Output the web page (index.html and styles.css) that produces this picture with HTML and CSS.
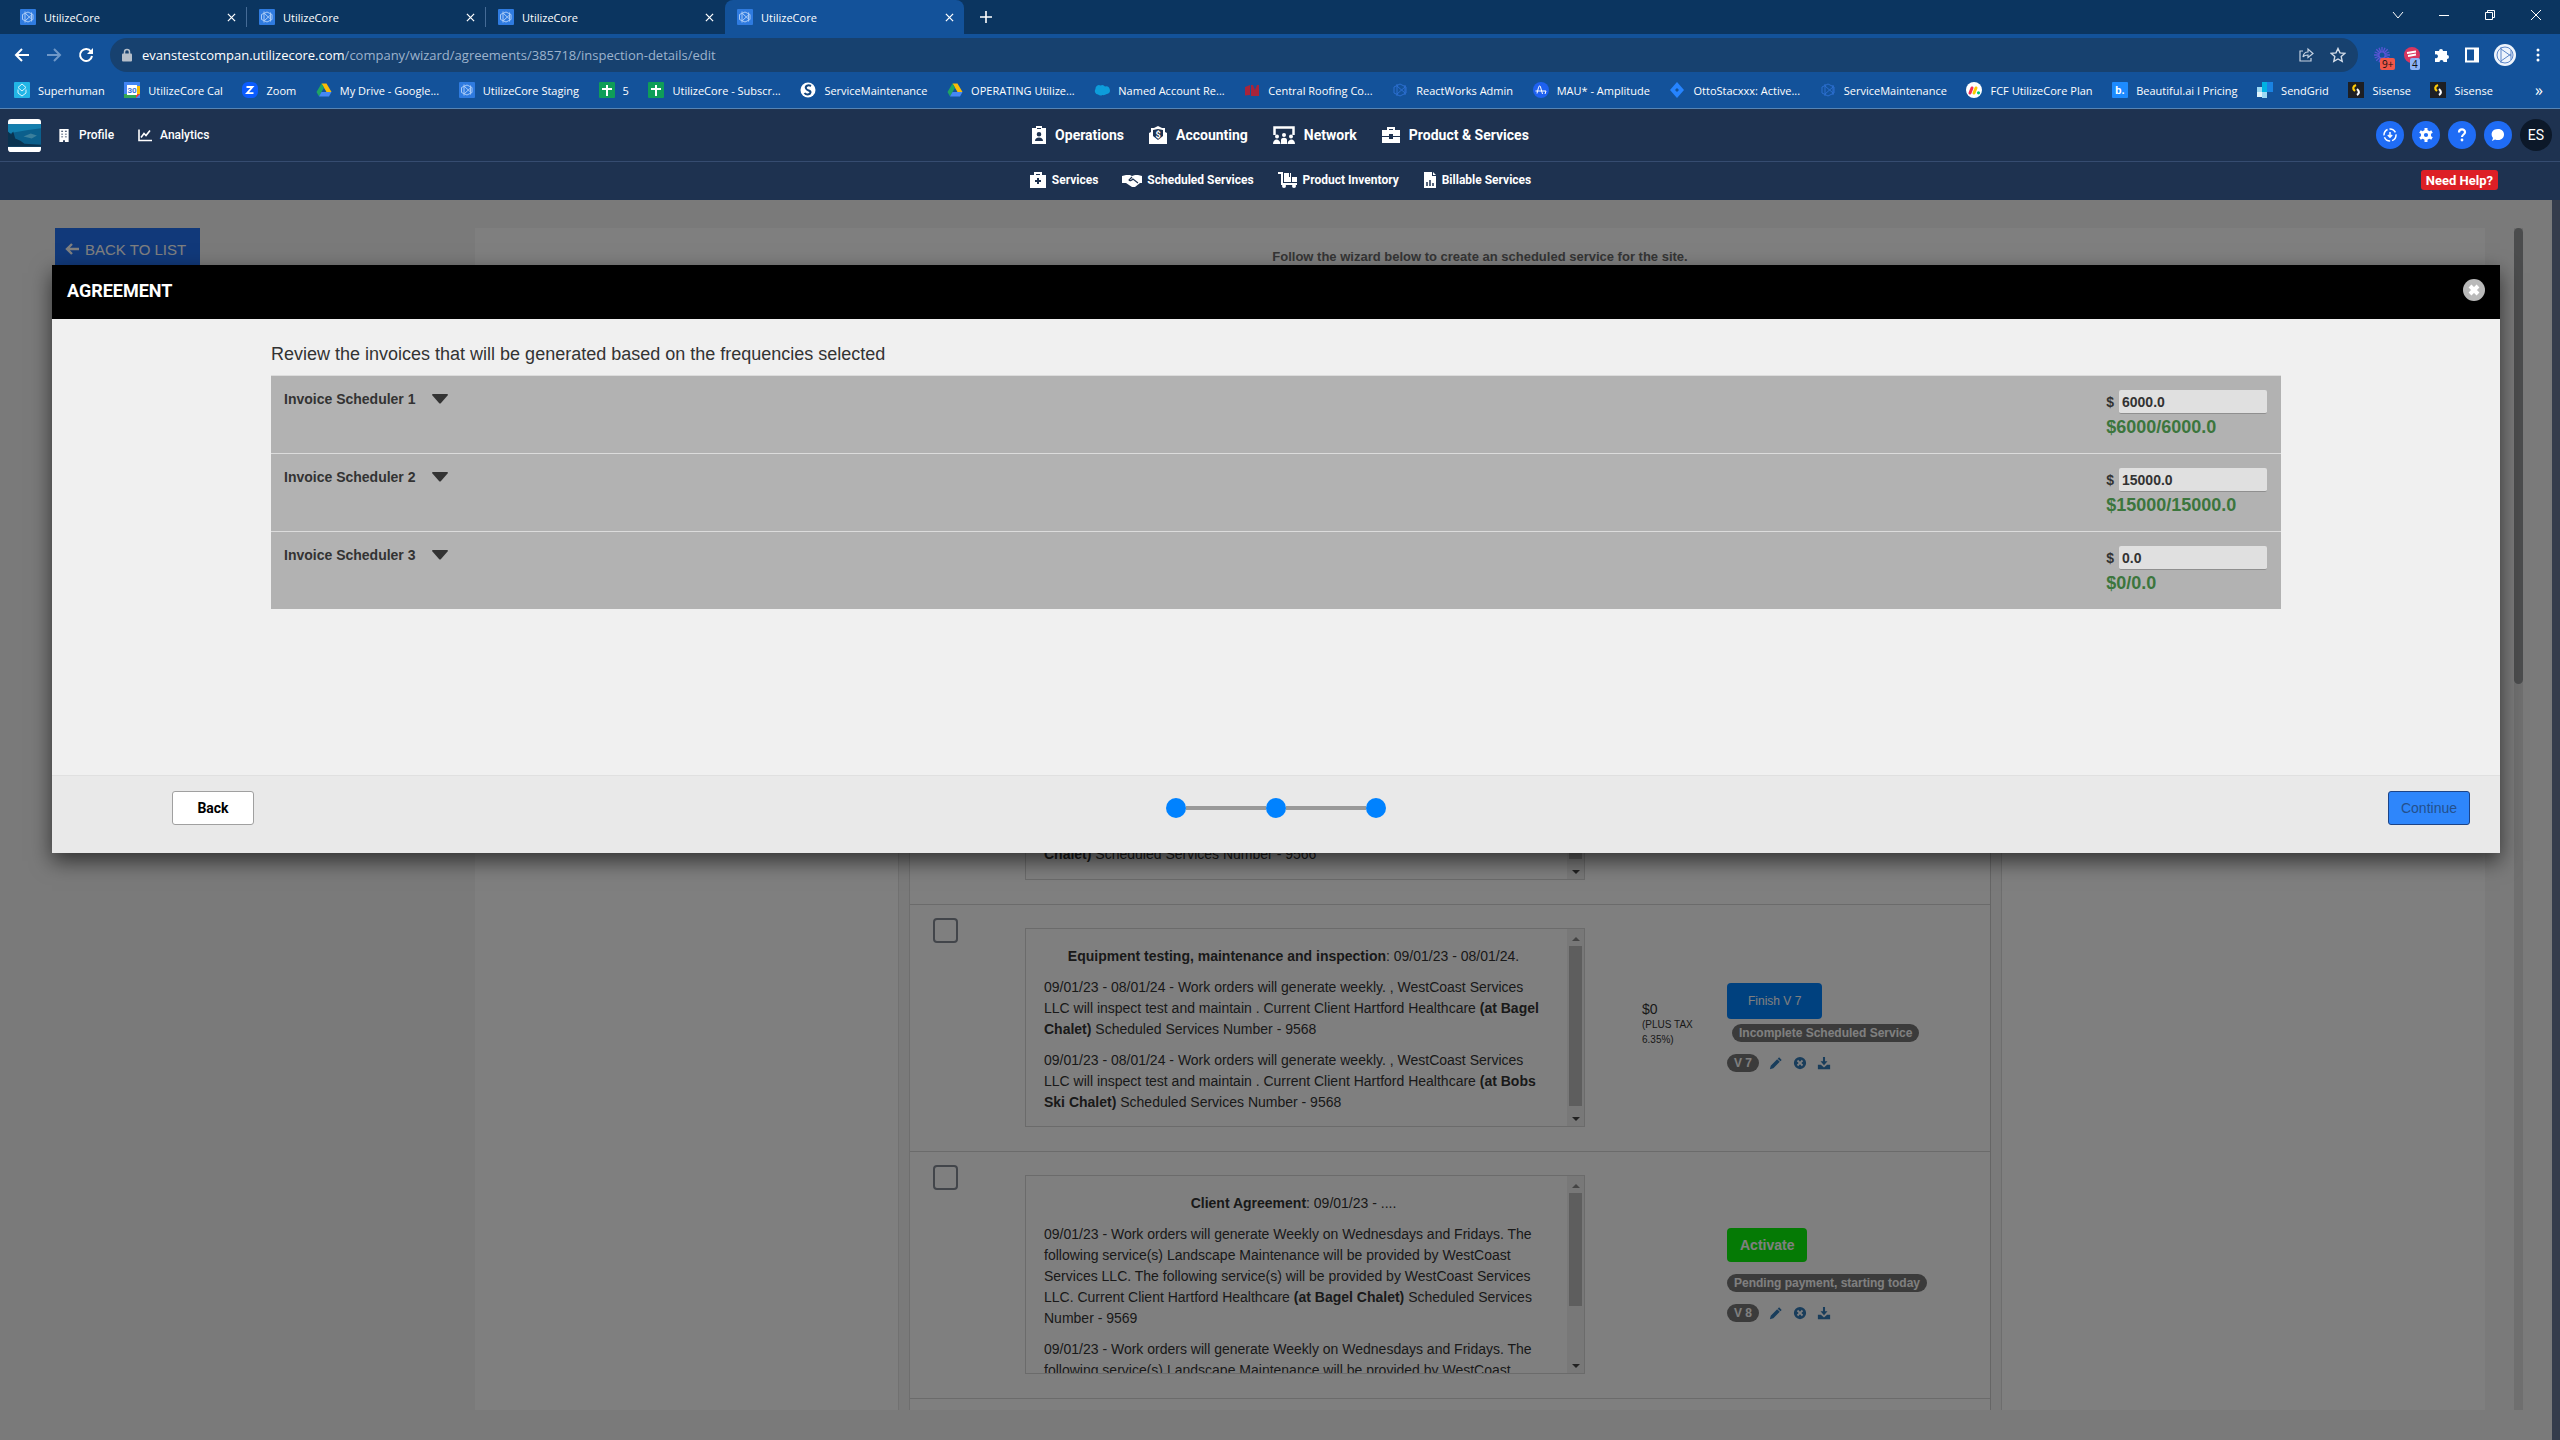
FILE: index.html
```
<!DOCTYPE html>
<html lang="en">
<head>
    <meta charset="UTF-8">
    <meta name="viewport" content="width=device-width, initial-scale=1.0">
    <title>UtilizeCore</title>
    <link rel="stylesheet" href="styles.css">
</head>
<body>

<!-- shared icons -->
<svg class="icon-sheet" aria-hidden="true">
    <symbol id="uc" viewBox="0 0 16 16"><rect width="16" height="16" rx="1" fill="#2f7be0"/><g fill="none" stroke="#a9cbf7" stroke-width="1"><path d="M5 2.500v11M5 4l7 6.500M5 12l7-6.500M11.500 3.500v9"/><path d="M2.500 5.500 8 3l5 2.500v5L8 13l-5.500-2.500z"/></g></symbol>
    <symbol id="uc-ghost" viewBox="0 0 16 16"><g fill="none" stroke="#2c6fd0" stroke-width="1"><path d="M5 2v12M5 4l8 7M5 12l8-7M13 3v10"/><path d="M2 5l6-3 6 3v6l-6 3-6-3z"/></g></symbol>
    <symbol id="drive" viewBox="0 0 16 16"><path d="M5.500 1.500h5l5 8.500h-5z" fill="#fbbc04"/><path d="M5.500 1.500 8 5.800 3 14.500.5 10z" fill="#1fa463"/><path d="M5.500 10h10L13 14.500H3z" fill="#4688f4"/></symbol>
    <symbol id="sheet" viewBox="0 0 16 16"><rect width="16" height="16" rx="1" fill="#0f9d58"/><path d="M7 3h2v3h4v2H9v6H7V8H3V6h4z" fill="#fff"/></symbol>
    <symbol id="sisense" viewBox="0 0 16 16"><rect width="16" height="16" fill="#1d1f24"/><path d="M8 3C4.500 4.500 4.500 7 7 9" fill="none" stroke="#ffcb05" stroke-width="2.200"/><path d="M9 7c2.500 2 2.500 4.500 0 6" fill="none" stroke="#fff" stroke-width="2.200"/></symbol>
    <symbol id="close" viewBox="0 0 10 10"><path d="M1 1l8 8M9 1 1 9" fill="none" stroke="currentColor" stroke-width="1.400"/></symbol>
    <symbol id="pencil" viewBox="0 0 16 16"><path d="M11.500 1.500l3 3-1.500 1.500-3-3zM9.300 3.700l3 3L5 14l-4 1 1-4z" fill="currentColor"/></symbol>
    <symbol id="cancel" viewBox="0 0 16 16"><path fill="currentColor" fill-rule="evenodd" d="M8 1a7 7 0 1 0 0 14A7 7 0 0 0 8 1zM5.900 4.400 8 6.500l2.100-2.100 1.500 1.500L9.500 8l2.100 2.100-1.500 1.500L8 9.500l-2.100 2.100-1.500-1.500L6.500 8 4.400 5.900z"/></symbol>
    <symbol id="download" viewBox="0 0 16 16"><path fill="currentColor" d="M6.800 1h2.400v5H12L8 10.500 4 6h2.800zM1 10h3.500L8 13l3.500-3H15v5H1z"/></symbol>
    <symbol id="caret" viewBox="0 0 16 10"><path d="M0 1 Q0 0 1 0H15Q16 0 16 1L9 9Q8 10 7 9z" fill="currentColor"/></symbol>
</svg>

<div class="browser">
    <div class="tab-strip">
        <div class="tab"><svg class="favicon"><use href="#uc"/></svg><span>UtilizeCore</span><button aria-label="Close tab"><svg><use href="#close"/></svg></button></div>
        <div class="tab"><svg class="favicon"><use href="#uc"/></svg><span>UtilizeCore</span><button aria-label="Close tab"><svg><use href="#close"/></svg></button></div>
        <div class="tab"><svg class="favicon"><use href="#uc"/></svg><span>UtilizeCore</span><button aria-label="Close tab"><svg><use href="#close"/></svg></button></div>
        <div class="tab active"><svg class="favicon"><use href="#uc"/></svg><span>UtilizeCore</span><button aria-label="Close tab"><svg><use href="#close"/></svg></button></div>
        <button class="new-tab" aria-label="New tab"><svg viewBox="0 0 12 12"><path d="M6 0v12M0 6h12" stroke="#fff" stroke-width="1.600"/></svg></button>
        <div class="window-buttons">
            <button aria-label="Search tabs"><svg viewBox="0 0 12 12"><path d="M1 3l5 6 5-6" fill="none" stroke="#fff"/></svg></button>
            <button aria-label="Minimize"><svg viewBox="0 0 12 12"><path d="M1 6.500h10" stroke="#fff"/></svg></button>
            <button aria-label="Restore"><svg viewBox="0 0 12 12"><path d="M1.500 3.500h7v7h-7zM3.500 3.500v-2h7v7h-2" fill="none" stroke="#fff"/></svg></button>
            <button aria-label="Close"><svg viewBox="0 0 12 12"><path d="M1 1l10 10M11 1 1 11" stroke="#fff"/></svg></button>
        </div>
    </div>

    <div class="toolbar">
        <button aria-label="Back"><svg viewBox="0 0 16 16"><path d="M15 8H2M8 2 2 8l6 6" fill="none" stroke="#fff" stroke-width="2"/></svg></button>
        <button aria-label="Forward"><svg viewBox="0 0 16 16"><path d="M1 8h13M8 2l6 6-6 6" fill="none" stroke="#6f98c8" stroke-width="2"/></svg></button>
        <button aria-label="Reload"><svg viewBox="0 0 16 16"><path d="M13 4.500A6 6 0 1 0 14 9" fill="none" stroke="#fff" stroke-width="2"/><path d="M15 1v6H9z" fill="#fff"/></svg></button>
        <div class="omnibox">
            <svg class="lock" viewBox="0 0 10 14"><path d="M2.500 6V4a2.500 2.500 0 0 1 5 0v2" fill="none" stroke="#b6bfca" stroke-width="1.500"/><rect y="5.500" width="10" height="8" rx="1" fill="#b6bfca"/></svg>
            <span class="url">evanstestcompan.utilizecore.com<span>/company/wizard/agreements/385718/inspection-details/edit</span></span>
            <button aria-label="Share"><svg viewBox="0 0 16 16"><path d="M5 4H2v10h11v-3M5 10c.5-3.500 2.500-5 5-5V2l5 4.500-5 4V8c-2.500 0-4 .5-5 2z" fill="none" stroke="#c5d2e2" stroke-width="1.200"/></svg></button>
            <button aria-label="Bookmark"><svg viewBox="0 0 16 16"><path d="M8 1.500l2 4.400 4.800.5-3.600 3.200 1 4.800L8 12l-4.200 2.400 1-4.800L1.200 6.400 6 5.900z" fill="none" stroke="#d5deea" stroke-width="1.400"/></svg></button>
        </div>
        <div class="extensions">
            <button class="ext" aria-label="Loom"><svg viewBox="0 0 16 16"><path d="M8 0v16M0 8h16M2.300 2.300l11.400 11.400M13.700 2.300 2.300 13.700M5 .7l6 14.600M15.300 5 .7 11M11 .7 5 15.300M.7 5l14.600 6" stroke="#5a55d6" stroke-width="1.300"/><circle cx="8" cy="8" r="2.500" fill="#13529a"/></svg><span class="badge-red">9+</span></button>
            <button class="ext" aria-label="Recorder"><svg viewBox="0 0 16 16"><circle cx="8" cy="8" r="8" fill="#d9365f"/><path d="M3 6l9-1.500M4 9l8-1.500" stroke="#fff" stroke-width="1.800"/></svg><span class="badge-blue">4</span></button>
            <button aria-label="Extensions"><svg viewBox="0 0 16 16"><path d="M1 4h4a2 2 0 1 1 4 0h4v4a2 2 0 1 1 0 4v3H9.500a2 2 0 1 0-4 0H1v-4a2 2 0 1 0 0-3.500z" fill="#fff"/></svg></button>
            <button aria-label="Side panel"><svg viewBox="0 0 16 16"><path d="M2 1.500h12v13H2z" fill="none" stroke="#fff" stroke-width="2"/><path d="M10 1h5v14h-5z" fill="#fff"/></svg></button>
            <button class="avatar" aria-label="Account"><svg viewBox="0 0 22 22"><circle cx="11" cy="11" r="11" fill="#eef4fc"/><g fill="none" stroke="#5c86c8"><path d="M7 3v16M7 5l10 7M7 17l10-7M17 6v10"/><circle cx="11" cy="11" r="8"/></g></svg></button>
            <button aria-label="Menu"><svg viewBox="0 0 16 16"><circle cx="8" cy="3" r="1.500" fill="#fff"/><circle cx="8" cy="8" r="1.500" fill="#fff"/><circle cx="8" cy="13" r="1.500" fill="#fff"/></svg></button>
        </div>
    </div>

    <nav class="bookmarks">
        <div class="bookmark-list">
            <a href="#"><svg viewBox="0 0 16 16"><rect width="16" height="16" rx="1" fill="#22b5e6"/><path d="M8 2l4 3.500L8 9 4 5.500zM4 7.500V11l4 3 4-3V7.500" fill="none" stroke="#d8f4fd"/></svg>Superhuman</a>
            <a href="#"><svg viewBox="0 0 16 16"><rect width="16" height="16" fill="#4285f4"/><path d="M12 4h4v8h-4z" fill="#fbbc04"/><path d="M0 12h12v4H0z" fill="#34a853"/><path d="M12 12h4l-4 4z" fill="#ea4335"/><rect x="3" y="3" width="10" height="10" fill="#fff"/><text x="8" y="11" text-anchor="middle" class="cal-day">30</text></svg>UtilizeCore Cal</a>
            <a href="#"><svg viewBox="0 0 16 16"><rect width="16" height="16" rx="6" fill="#0b5cff"/><path d="M4.500 5h6L5 11.200h6.500" fill="none" stroke="#fff" stroke-width="1.800"/></svg>Zoom</a>
            <a href="#"><svg><use href="#drive"/></svg>My Drive - Google...</a>
            <a href="#"><svg><use href="#uc"/></svg>UtilizeCore Staging</a>
            <a href="#"><svg><use href="#sheet"/></svg>5</a>
            <a href="#"><svg><use href="#sheet"/></svg>UtilizeCore - Subscr...</a>
            <a href="#"><svg viewBox="0 0 16 16"><circle cx="8" cy="8" r="7.500" fill="#fff"/><path d="M11 4C8 2.500 5 4 6 6.500s5 1.500 4.500 4S6 13 4.500 11" fill="none" stroke="#14467f" stroke-width="2"/></svg>ServiceMaintenance</a>
            <a href="#"><svg><use href="#drive"/></svg>OPERATING Utilize...</a>
            <a href="#"><svg viewBox="0 0 16 16"><path d="M4 12.500A3.500 3.500 0 0 1 1.500 7 3.500 3.500 0 0 1 6.500 3.500 3.500 3.500 0 0 1 11 4.500a3.800 3.800 0 0 1 2 7.500c-1.500.5-3 1.500-4.500 1-2 1-3 .5-4.500-.5z" fill="#0d9ddb"/></svg>Named Account Re...</a>
            <a href="#"><svg viewBox="0 0 16 16"><path d="M1 5l5-2v10l-5 .5zM7 3h2l2 5 2-5h2v11h-8z" fill="#a8243a"/></svg>Central Roofing Co...</a>
            <a href="#"><svg><use href="#uc-ghost"/></svg>ReactWorks Admin</a>
            <a href="#"><svg viewBox="0 0 16 16"><circle cx="8" cy="8" r="8" fill="#1e61f0"/><path d="M2.500 9h7.500M4 11.500C5.500 5 6.500 2 7.500 5L9.500 12M10 9h3l-1 3" fill="none" stroke="#fff"/></svg>MAU* - Amplitude</a>
            <a href="#"><svg viewBox="0 0 16 16"><path d="M8 0l7 8-7 8-7-8z" fill="#2684ff"/><path d="M8 6l2 2-2 2-2-2z" fill="#13529a"/></svg>OttoStacxxx: Active...</a>
            <a href="#"><svg><use href="#uc-ghost"/></svg>ServiceMaintenance</a>
            <a href="#"><svg viewBox="0 0 16 16"><circle cx="8" cy="8" r="8" fill="#fff"/><path d="M4 11l2-5" stroke="#f62b54" stroke-width="3" stroke-linecap="round"/><path d="M8 11l2-5" stroke="#fc0" stroke-width="3" stroke-linecap="round"/><circle cx="12.500" cy="10.800" r="1.600" fill="#00ca72"/></svg>FCF UtilizeCore Plan</a>
            <a href="#"><svg viewBox="0 0 16 16"><rect width="16" height="16" rx="1" fill="#1d8bff"/><text x="8" y="12" text-anchor="middle" class="letter-b">b.</text></svg>Beautiful.ai I Pricing</a>
            <a href="#"><svg viewBox="0 0 16 16"><path d="M5 0h5v5H5zM5 5h5v5H5z" fill="#00b2e3"/><path d="M10 0h6v10h-6z" fill="#1a82e2"/><path d="M0 5h5v5H0zM5 10h5v6H5z" fill="#9dd9f3"/><path d="M0 10h5v5H0z" fill="#dff3fb"/></svg>SendGrid</a>
            <a href="#"><svg><use href="#sisense"/></svg>Sisense</a>
            <a href="#"><svg><use href="#sisense"/></svg>Sisense</a>
        </div>
        <button class="more-bookmarks" aria-label="More bookmarks">»</button>
    </nav>
</div>

<header class="site-header">
    <div class="nav-row">
        <div class="nav-left">
            <svg class="company-logo" viewBox="0 0 32 32"><rect width="32" height="32" rx="3" fill="#fff"/><rect y="5" width="32" height="22" fill="#0b5f8c"/><path d="M0 5h32v4L18 11 0 14z" fill="#137fae"/><path d="M0 12l3 3 2-3 2 7 5 2 4 3 16 1v2H0z" fill="#0a3350"/><path d="M15 17l7-3 6 2-5 3z" fill="#3a7f9c"/></svg>
            <a href="#"><svg viewBox="0 0 12 14"><path fill="#fff" fill-rule="evenodd" d="M1 0h10v14H7v-2H5v2H1zM3 2v1h2V2zm4 0v1h2V2zM3 5v1h2V5zm4 0v1h2V5zM3 8v1h2V8zm4 0v1h2V8z"/></svg>Profile</a>
            <a href="#"><svg viewBox="0 0 14 12"><path d="M1 0v11h13M3 8l3-4 2 2 4-5" fill="none" stroke="#fff" stroke-width="1.600"/></svg>Analytics</a>
        </div>
        <nav class="main-menu">
            <a href="#"><svg class="w16" viewBox="0 0 16 18"><path fill="#fff" fill-rule="evenodd" d="M5 2V0h6v2h4v16H1V2zm1 0v1h4V2zM8 6a2.300 2.300 0 1 0 0 4.600A2.300 2.300 0 0 0 8 6zm-4 9h8c0-2-1.500-3.500-4-3.500S4 13 4 15z"/></svg>Operations</a>
            <a href="#"><svg class="w20" viewBox="0 0 20 18"><path fill="#fff" fill-rule="evenodd" d="M6 2l4-2 4 2h3v4l2 1v11H1V7l2-1V2zm4 1L5 4v6l5 4 5-4V4z"/><text x="10" y="12" text-anchor="middle" class="dollar">$</text></svg>Accounting</a>
            <a href="#"><svg class="w24" viewBox="0 0 24 18"><path d="M2.500 9V1.500h19V9" fill="none" stroke="#fff" stroke-width="2.500"/><g fill="#fff"><circle cx="5" cy="10.500" r="2"/><circle cx="12" cy="9" r="2"/><circle cx="19" cy="10.500" r="2"/><path d="M1 18c0-6 7-6 7.500 0zM9 18v-4c0-3 6-3 6 0v4zM15.500 18c.5-6 7.500-6 7.500 0z"/></g></svg>Network</a>
            <a href="#"><svg class="w20" viewBox="0 0 20 18"><path fill="#fff" fill-rule="evenodd" d="M6 4V1h8v3h5v6h-7V8H8v2H1V4zm2 0h4V3H8zM1 11h7v2h4v-2h7v6H1z"/></svg>Product &amp; Services</a>
        </nav>
        <div class="nav-right">
            <button aria-label="Quick add"><svg viewBox="0 0 16 16"><circle cx="8" cy="8" r="6" fill="none" stroke="#fff" stroke-width="1.500" stroke-dasharray="7 2"/><path d="M8 5v5M5.800 8 8 10.200 10.200 8" fill="none" stroke="#fff" stroke-width="1.500"/></svg></button>
            <button aria-label="Settings"><svg viewBox="0 0 16 16"><circle cx="8" cy="8" r="3.600" fill="none" stroke="#fff" stroke-width="3"/><path d="M8 1v3M8 12v3M2 4.500l2.500 1.500M11.500 10l2.500 1.500M2 11.500 4.500 10M11.500 6 14 4.500" stroke="#fff" stroke-width="3"/></svg></button>
            <button aria-label="Help"><svg viewBox="0 0 16 16"><path d="M5 5.500C5 1.500 11 1.500 11 5.200 11 7.500 8 7.500 8 10" fill="none" stroke="#fff" stroke-width="2.200"/><circle cx="8" cy="13" r="1.400" fill="#fff"/></svg></button>
            <button aria-label="Chat"><svg viewBox="0 0 16 16"><path d="M8 2c8 0 8 11 0 11-1 0-2 0-3-.5L2 14l1-3C0 7 2 2 8 2z" fill="#fff"/></svg></button>
            <button class="user">ES</button>
        </div>
    </div>
    <div class="nav-row sub">
        <div></div>
        <nav class="sub-menu">
            <a href="#"><svg class="w18" viewBox="0 0 18 16"><path fill="#fff" fill-rule="evenodd" d="M5 3V0h8v3h4v13H1V3zm2 0h4V2H7zm1 3v2H6v2h2v2h2v-2h2V8h-2V6z"/></svg>Services</a>
            <a href="#"><svg class="w20" viewBox="0 0 20 14"><path fill="#fff" d="M0 3l4-1 4 0 2 1 3-1 3 0 4 1v7h-2l-5 4h-3l-6-4H0z"/><path d="M10 4 7 7c1 1.500 3 0 4-1l5 4" fill="none" stroke="#1e3250" stroke-width="1.200"/></svg>Scheduled Services</a>
            <a href="#"><svg class="w20" viewBox="0 0 20 16"><path d="M0 1h4v11h15" fill="none" stroke="#fff" stroke-width="2"/><path fill="#fff" d="M6 1h5v4h1V1h1v9H6zM14 5h5v5h-5z"/><circle cx="6" cy="14" r="2" fill="#fff"/><circle cx="16" cy="14" r="2" fill="#fff"/></svg>Product Inventory</a>
            <a href="#"><svg class="w14" viewBox="0 0 14 16"><path fill="#fff" d="M1 0h8v4h4v12H1zM10 0l3 3h-3z"/><path d="M4 14v-4M7 14V8M10 14v-3" stroke="#1e3250" stroke-width="1.500"/></svg>Billable Services</a>
        </nav>
        <div class="help-wrap"><button class="need-help">Need Help?</button></div>
    </div>
</header>

<main class="page">
    <div class="page-content">
        <div class="side">
            <a class="back-to-list" href="#"><svg viewBox="0 0 14 12"><path d="M14 6H2M7 1 2 6l5 5" fill="none" stroke="currentColor" stroke-width="2.400"/></svg>BACK TO LIST</a>
        </div>
        <section class="wizard">
            <p class="intro">Follow the wizard below to create an scheduled service for the site.</p>
            <div class="wizard-body">
                <div class="gutter"></div>
                <table class="agreements">
                    <tr>
                        <td class="check-cell"></td>
                        <td class="desc-cell">
                            <div class="scroll-box">
                                <div class="scroll-text at-end">
                                    <p><b>Chalet)</b> Scheduled Services Number - 9566</p>
                                </div>
                                <div class="scrollbar"><i class="up"></i><div class="thumb long"></div><i class="down"></i></div>
                            </div>
                        </td>
                        <td class="price-cell"></td>
                        <td class="action-cell"></td>
                    </tr>
                    <tr>
                        <td class="check-cell"><input type="checkbox" aria-label="Select agreement 9568"></td>
                        <td class="desc-cell">
                            <div class="scroll-box">
                                <div class="scroll-text">
                                    <p class="box-title"><b>Equipment testing, maintenance and inspection</b>: 09/01/23 - 08/01/24.</p>
                                    <p>09/01/23 - 08/01/24 - Work orders will generate weekly. , WestCoast Services LLC will inspect test and maintain . Current Client Hartford Healthcare <b>(at Bagel Chalet)</b> Scheduled Services Number - 9568</p>
                                    <p>09/01/23 - 08/01/24 - Work orders will generate weekly. , WestCoast Services LLC will inspect test and maintain . Current Client Hartford Healthcare <b>(at Bobs Ski Chalet)</b> Scheduled Services Number - 9568</p>
                                </div>
                                <div class="scrollbar"><i class="up"></i><div class="thumb long"></div><i class="down"></i></div>
                            </div>
                        </td>
                        <td class="price-cell">$0<small>(PLUS TAX 6.35%)</small></td>
                        <td class="action-cell">
                            <button class="finish">Finish V 7</button>
                            <div class="status indent"><span class="pill">Incomplete Scheduled Service</span></div>
                            <div class="tools"><span class="pill">V 7</span><a href="#" aria-label="Edit"><svg><use href="#pencil"/></svg></a><a href="#" aria-label="Cancel"><svg><use href="#cancel"/></svg></a><a href="#" aria-label="Download"><svg><use href="#download"/></svg></a></div>
                        </td>
                    </tr>
                    <tr>
                        <td class="check-cell"><input type="checkbox" aria-label="Select agreement 9569"></td>
                        <td class="desc-cell">
                            <div class="scroll-box">
                                <div class="scroll-text">
                                    <p class="box-title"><b>Client Agreement</b>: 09/01/23 - ....</p>
                                    <p>09/01/23 - Work orders will generate Weekly on Wednesdays and Fridays. The following service(s) Landscape Maintenance will be provided by WestCoast Services LLC. The following service(s) will be provided by WestCoast Services LLC. Current Client Hartford Healthcare <b>(at Bagel Chalet)</b> Scheduled Services Number - 9569</p>
                                    <p>09/01/23 - Work orders will generate Weekly on Wednesdays and Fridays. The following service(s) Landscape Maintenance will be provided by WestCoast</p>
                                </div>
                                <div class="scrollbar"><i class="up"></i><div class="thumb short"></div><i class="down"></i></div>
                            </div>
                        </td>
                        <td class="price-cell"></td>
                        <td class="action-cell">
                            <button class="activate">Activate</button>
                            <div class="status"><span class="pill">Pending payment, starting today</span></div>
                            <div class="tools"><span class="pill">V 8</span><a href="#" aria-label="Edit"><svg><use href="#pencil"/></svg></a><a href="#" aria-label="Cancel"><svg><use href="#cancel"/></svg></a><a href="#" aria-label="Download"><svg><use href="#download"/></svg></a></div>
                        </td>
                    </tr>
                </table>
                <div class="gutter right"></div>
            </div>
        </section>
        <div class="page-track"><div class="page-thumb"></div></div>
    </div>
    <div class="backdrop"></div>

    <div class="modal" role="dialog" aria-labelledby="modal-title">
        <div class="modal-header">
            <h2 id="modal-title">AGREEMENT</h2>
            <button class="modal-close" aria-label="Close"><svg viewBox="0 0 22 22"><circle cx="11" cy="11" r="11" fill="#b9b9b9"/><path d="M7 7l8 8M15 7l-8 8" stroke="#fff" stroke-width="4"/></svg></button>
        </div>
        <div class="modal-body">
            <p class="lead">Review the invoices that will be generated based on the frequencies selected</p>
            <div class="schedulers">
                <div class="scheduler">
                    <button class="toggle">Invoice Scheduler 1<svg><use href="#caret"/></svg></button>
                    <div class="amount">
                        <label>$<input type="text" value="6000.0" aria-label="Invoice Scheduler 1 amount"></label>
                        <div class="total">$6000/6000.0</div>
                    </div>
                </div>
                <div class="scheduler">
                    <button class="toggle">Invoice Scheduler 2<svg><use href="#caret"/></svg></button>
                    <div class="amount">
                        <label>$<input type="text" value="15000.0" aria-label="Invoice Scheduler 2 amount"></label>
                        <div class="total">$15000/15000.0</div>
                    </div>
                </div>
                <div class="scheduler">
                    <button class="toggle">Invoice Scheduler 3<svg><use href="#caret"/></svg></button>
                    <div class="amount">
                        <label>$<input type="text" value="0.0" aria-label="Invoice Scheduler 3 amount"></label>
                        <div class="total">$0/0.0</div>
                    </div>
                </div>
            </div>
        </div>
        <div class="modal-footer">
            <div><button class="back">Back</button></div>
            <div class="steps"><i></i><b></b><i></i><b></b><i></i></div>
            <div class="footer-right"><button class="continue">Continue</button></div>
        </div>
    </div>
</main>

</body>
</html>
```

FILE: styles.css
```
* {
    box-sizing: border-box;
}

body {
    margin: 0;
    min-height: 100vh;
    display: flex;
    flex-direction: column;
    font-family: "Liberation Sans", Arial, sans-serif;
    font-size: 14px;
    color: #333;
    background-color: #353c4b;
}

button {
    border: none;
    background: none;
    padding: 0;
    font-family: inherit;
    color: inherit;
}

a {
    color: inherit;
    text-decoration: none;
}

svg {
    display: block;
    flex: none;
}

.icon-sheet {
    display: none;
}

/* Browser bars */
.browser {
    font-family: "Open Sans", "Noto Sans", sans-serif;
    font-size: 11px;
    color: #fff;
    background-color: #13529a;
    border-bottom: 1px solid #5684b4;
}

.tab-strip {
    display: flex;
    align-items: center;
    height: 34px;
    padding-left: 8px;
    background-color: #0b3560;
}

.tab {
    display: flex;
    align-items: center;
    gap: 8px;
    width: 239px;
    height: 20px;
    padding: 0 10px 0 12px;
    border-right: 1px solid #456b96;
}

.tab:nth-child(3) {
    border-right-color: transparent;
}

.tab.active {
    height: 34px;
    border-right: none;
    border-radius: 8px 8px 0 0;
    background-color: #13529a;
}

.tab span {
    flex: 1;
}

.favicon {
    width: 16px;
    height: 16px;
}

.tab button svg {
    width: 9px;
    height: 9px;
}

.new-tab {
    margin-left: 16px;
}

.new-tab svg {
    width: 12px;
    height: 12px;
}

.window-buttons {
    display: flex;
    gap: 34px;
    margin: -4px 18px 0 auto;
}

.window-buttons svg {
    width: 12px;
    height: 12px;
}

.toolbar {
    display: flex;
    align-items: center;
    gap: 16px;
    padding: 4px 14px 0;
}

.toolbar svg {
    width: 16px;
    height: 16px;
}

.omnibox {
    flex: 1;
    display: flex;
    align-items: center;
    gap: 16px;
    height: 34px;
    padding: 0 12px;
    border-radius: 17px;
    background-color: #17416f;
    font-size: 13px;
}

.toolbar .lock {
    width: 10px;
    height: 14px;
    margin-right: -6px;
}

.url {
    flex: 1;
}

.url span {
    color: #9db3cd;
}

.extensions {
    display: flex;
    align-items: center;
    gap: 14px;
}

.ext {
    position: relative;
}

.ext span {
    position: absolute;
    left: 6px;
    top: 11px;
    padding: 0 2px;
    border-radius: 2px;
    font-size: 10px;
    line-height: 12px;
    color: #111;
}

.badge-red {
    background-color: #f0574a;
}

.badge-blue {
    background-color: #8db4f5;
}

.toolbar .avatar svg {
    width: 22px;
    height: 22px;
}

.bookmarks {
    display: flex;
    align-items: center;
    height: 36px;
    padding: 0 17px 0 14px;
}

.bookmark-list {
    flex: 1;
    display: flex;
    justify-content: space-between;
    padding-right: 42px;
}

.bookmark-list a {
    display: flex;
    align-items: center;
    gap: 8px;
    white-space: nowrap;
}

.bookmark-list svg {
    width: 16px;
    height: 16px;
}

.more-bookmarks {
    font-size: 16px;
}

.cal-day {
    font: bold 8px Roboto, sans-serif;
    fill: #3b73d9;
}

.letter-b {
    font: bold 11px Roboto, sans-serif;
    fill: #fff;
}

/* Site header */
.site-header {
    font-family: Roboto, sans-serif;
    font-weight: bold;
    color: #fff;
    background-color: #1e3250;
}

.nav-row {
    display: grid;
    grid-template-columns: 1fr auto 1fr;
    align-items: center;
    height: 53px;
    padding: 0 8px;
    border-bottom: 1px solid #364c70;
}

.nav-row.sub {
    height: 38px;
    padding-bottom: 2px;
    border-bottom: none;
}

.nav-row a,
.nav-left,
.main-menu,
.sub-menu,
.nav-right {
    display: flex;
    align-items: center;
}

.nav-left {
    gap: 24px;
    font-size: 12px;
    font-weight: 500;
}

.nav-left a {
    gap: 8px;
}

.nav-left a svg {
    width: 14px;
    height: 13px;
}

.nav-left .company-logo {
    width: 33px;
    height: 33px;
    margin-right: -8px;
}

.main-menu {
    gap: 24px;
    font-size: 14px;
}

.main-menu a {
    gap: 8px;
}

.main-menu svg {
    height: 18px;
}

.sub-menu {
    gap: 24px;
    font-size: 12px;
}

.sub-menu a {
    gap: 5px;
}

.sub-menu svg {
    height: 16px;
}

.w14 {
    width: 14px;
}

.w16 {
    width: 16px;
}

.w18 {
    width: 18px;
}

.w20 {
    width: 20px;
}

.w24 {
    width: 24px;
}

.dollar {
    font: bold 9px Roboto, sans-serif;
    fill: #fff;
}

.nav-right {
    justify-content: flex-end;
    gap: 8px;
}

.nav-right button {
    display: flex;
    align-items: center;
    justify-content: center;
    width: 28px;
    height: 28px;
    border-radius: 50%;
    background-color: #1f6cf5;
}

.nav-right svg {
    width: 16px;
    height: 16px;
}

.nav-right .user {
    width: 32px;
    height: 32px;
    background-color: #0c1829;
    font-size: 14px;
}

.help-wrap {
    display: flex;
    justify-content: flex-end;
    padding-right: 54px;
}

.need-help {
    height: 20px;
    padding: 0 5px;
    border-radius: 3px;
    background-color: #dd1f26;
    font-size: 13px;
    font-weight: bold;
}

/* Page behind the dialog */
.page {
    position: relative;
    flex: 1;
    display: flex;
    margin-right: 8px;
    background-color: #f4f4f4;
}

.page-content {
    flex: 1;
    display: flex;
    padding: 28px 29px 30px 55px;
}

.side {
    width: 420px;
}

.back-to-list {
    display: inline-flex;
    align-items: center;
    gap: 6px;
    height: 42px;
    padding: 0 14px 0 10px;
    background-color: #2272f4;
    color: #fff;
    font-size: 15px;
}

.back-to-list svg {
    width: 14px;
    height: 12px;
}

.wizard {
    flex: 1;
    background-color: #fff;
    overflow: hidden;
    display: flex;
    flex-direction: column;
}

.intro {
    margin: 20px 0;
    text-align: center;
    font-size: 13px;
    font-weight: bold;
    line-height: 18px;
    color: #6a6a6a;
}

.wizard-body {
    flex: 1;
    display: flex;
    padding-left: 423px;
}

.gutter {
    width: 12px;
    background-color: #f4f4f4;
    border-left: 1px solid #e2e2e2;
    border-right: 1px solid #dcdcdc;
}

.gutter.right {
    border-left-color: #ccc;
}

.agreements {
    width: 1080px;
    margin-top: 371px;
    table-layout: fixed;
    border-collapse: collapse;
    align-self: flex-start;
}

.agreements tr {
    height: 247px;
    border-bottom: 1px solid #d6d6d6;
}

.agreements td {
    padding: 0;
    vertical-align: middle;
}

.agreements .check-cell {
    width: 115px;
    padding: 13px 0 0 23px;
    vertical-align: top;
}

.check-cell input {
    appearance: none;
    display: block;
    width: 25px;
    height: 25px;
    margin: 0;
    border: 2px solid #848b95;
    border-radius: 4px;
}

.agreements .desc-cell {
    width: 617px;
    padding-right: 57px;
}

.agreements .price-cell {
    width: 85px;
    padding: 0 24px 8px 0;
    font-size: 14px;
}

.price-cell small {
    display: block;
    font-size: 10px;
    line-height: 15px;
}

.scroll-box {
    display: flex;
    height: 199px;
    border: 1px solid #d6d6d6;
    color: #333;
}

.scroll-text {
    flex: 1;
    padding: 17px 24px 0 18px;
    overflow: hidden;
    font-size: 14px;
    line-height: 21px;
}

.scroll-text p {
    margin: 0 0 10px;
}

.scroll-text .box-title {
    text-align: center;
}

/* scrolled down to the last line */
.scroll-text.at-end {
    display: flex;
    align-items: flex-end;
    padding-bottom: 4px;
}

.scrollbar {
    display: flex;
    flex-direction: column;
    width: 17px;
    background-color: #f1f1f1;
}

.up,
.down {
    align-self: center;
    border: 4px solid transparent;
}

.up {
    margin: 4px 0 5px;
    border-bottom-color: #8a8a8a;
}

.down {
    margin: auto 0 1px;
    border-top-color: #444;
}

.thumb {
    margin: 0 2px;
    background-color: #bdbdbd;
}

.thumb.long {
    height: 160px;
}

.thumb.short {
    height: 113px;
}

.finish,
.activate {
    display: block;
    color: #fff;
    border-radius: 4px;
}

.finish {
    height: 36px;
    padding: 0 21px;
    background-color: #0082ff;
    font-size: 12px;
}

.activate {
    height: 34px;
    padding: 0 13px;
    background-color: #0bf50b;
    font-size: 14px;
    font-weight: bold;
}

.status {
    margin: 12px 0;
}

.status.indent {
    margin: 5px 0 12px 5px;
}

.pill {
    display: inline-block;
    padding: 0 7px;
    border-radius: 9px;
    background-color: #777;
    color: #fff;
    font-size: 12px;
    font-weight: bold;
    line-height: 18px;
}

.tools {
    display: flex;
    align-items: center;
    gap: 10px;
    color: #337ab7;
}

.tools svg {
    width: 14px;
    height: 14px;
}

.page-track {
    width: 9px;
    margin-left: 29px;
    background-color: #dedede;
}

.page-thumb {
    height: 456px;
    border-radius: 5px;
    background-color: #96989b;
}

.backdrop {
    position: absolute;
    inset: 0;
    background-color: rgba(0, 0, 0, 0.5);
}

/* Agreement dialog */
.modal {
    position: absolute;
    top: 65px;
    left: 52px;
    right: 52px;
    background-color: #f0f0f0;
    box-shadow: 0 8px 20px rgba(0, 0, 0, 0.6);
}

.modal-header {
    display: flex;
    align-items: center;
    justify-content: space-between;
    height: 54px;
    padding: 0 15px 4px;
    background-color: #000;
}

.modal-header h2 {
    margin: 0;
    font-family: Roboto, sans-serif;
    font-size: 18px;
    font-weight: bold;
    color: #fff;
}

.modal-close svg {
    width: 22px;
    height: 22px;
}

.modal-body {
    min-height: 456px;
    padding: 24px 219px;
}

.lead {
    margin: 0 0 10px;
    font-size: 18px;
    line-height: 22px;
}

.scheduler {
    display: flex;
    justify-content: space-between;
    height: 78px;
    padding: 14px 14px 0 13px;
    background-color: #b2b2b2;
    border-top: 1px solid #dcdcdc;
    font-weight: bold;
}

.toggle {
    display: flex;
    align-items: center;
    gap: 16px;
    height: 18px;
    font-size: 14px;
    font-weight: bold;
}

.toggle svg {
    width: 16px;
    height: 10px;
}

.amount label {
    display: flex;
    align-items: center;
    gap: 5px;
}

.amount input {
    width: 148px;
    height: 24px;
    padding: 0 3px;
    border: none;
    border-bottom: 1px solid #8f8f8f;
    border-radius: 2px;
    background-color: #e0e0e0;
    font-family: inherit;
    font-size: 14px;
    font-weight: bold;
    color: #333;
}

.total {
    font-size: 18px;
    line-height: 26px;
    color: #3c763d;
}

.modal-footer {
    display: grid;
    grid-template-columns: 1fr auto 1fr;
    align-items: start;
    height: 78px;
    padding: 15px 30px 0 120px;
    border-top: 1px solid #e0e0e0;
    background-color: #e9e9e9;
}

.modal-footer button {
    height: 34px;
    border-radius: 3px;
    font-size: 14px;
}

.back {
    width: 82px;
    border: 1px solid #a0a0a0;
    background-color: #fff;
    color: #000;
    font-family: Roboto, sans-serif;
    font-weight: bold;
}

.steps {
    display: flex;
    align-items: center;
    height: 34px;
    margin-right: 90px;
}

.steps i {
    width: 20px;
    height: 20px;
    border-radius: 50%;
    background-color: #0082ff;
}

.steps b {
    width: 80px;
    height: 4px;
    background-color: #999;
}

.footer-right {
    text-align: right;
}

.modal-footer .continue {
    width: 82px;
    border: 1px solid #1c4488;
    background-color: #2e86fb;
    color: #24508c;
}
```
